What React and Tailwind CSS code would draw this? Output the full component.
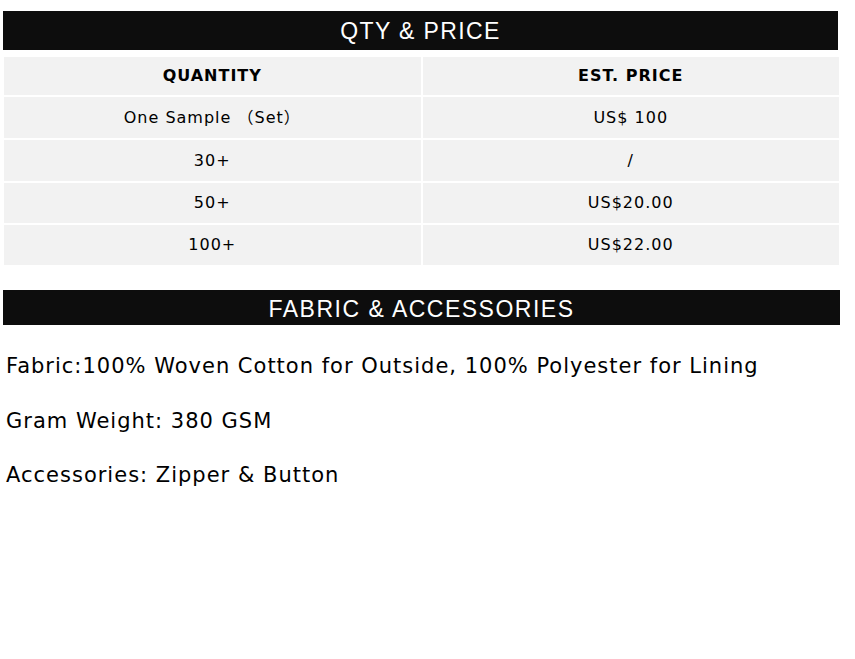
export default function App() {
  const rows = [
    ["One Sample （Set）", "US$ 100", "h-[41px]"],
    ["30+", "/", "h-[41px]"],
    ["50+", "US$20.00", "h-[40px]"],
    ["100+", "US$22.00", "h-[40px]"],
  ];

  return (
    <div className="bg-white w-[855px] h-[659px] pt-[11px] pl-[3px] font-['DejaVu_Sans','Noto_Sans_CJK_SC',sans-serif] text-black">
      <div className="w-[835px] h-[39px] pt-[1px] bg-[#0d0d0d] text-white flex items-center justify-center font-['Liberation_Sans',Arial,sans-serif] text-[23px] tracking-[1.4px]">
        QTY &amp; PRICE
      </div>

      <div className="mt-[7px] ml-[1px] w-[835px] grid grid-cols-2 gap-[2px] text-[16px] tracking-[1px]">
        <div className="h-[38px] bg-[#f2f2f2] flex items-center justify-center font-bold">QUANTITY</div>
        <div className="h-[38px] bg-[#f2f2f2] flex items-center justify-center font-bold">EST. PRICE</div>
        {rows.map(([qty, price, h]) => (
          <>
            <div key={qty} className={`${h} bg-[#f2f2f2] flex items-center justify-center`}>{qty}</div>
            <div key={qty + "p"} className={`${h} bg-[#f2f2f2] flex items-center justify-center`}>{price}</div>
          </>
        ))}
      </div>

      <div className="mt-[25px] w-[837px] h-[35px] pt-[3px] bg-[#0d0d0d] text-white flex items-center justify-center font-['Liberation_Sans',Arial,sans-serif] text-[23px] tracking-[1.5px]">
        FABRIC &amp; ACCESSORIES
      </div>

      <div className="pl-[3px] pt-[27px] text-[21px] leading-[28px] tracking-[1px] flex flex-col gap-[26.5px]">
        <p>Fabric:100% Woven Cotton for Outside, 100% Polyester for Lining</p>
        <p>Gram Weight: 380 GSM</p>
        <p>Accessories: Zipper &amp; Button</p>
      </div>
    </div>
  );
}
